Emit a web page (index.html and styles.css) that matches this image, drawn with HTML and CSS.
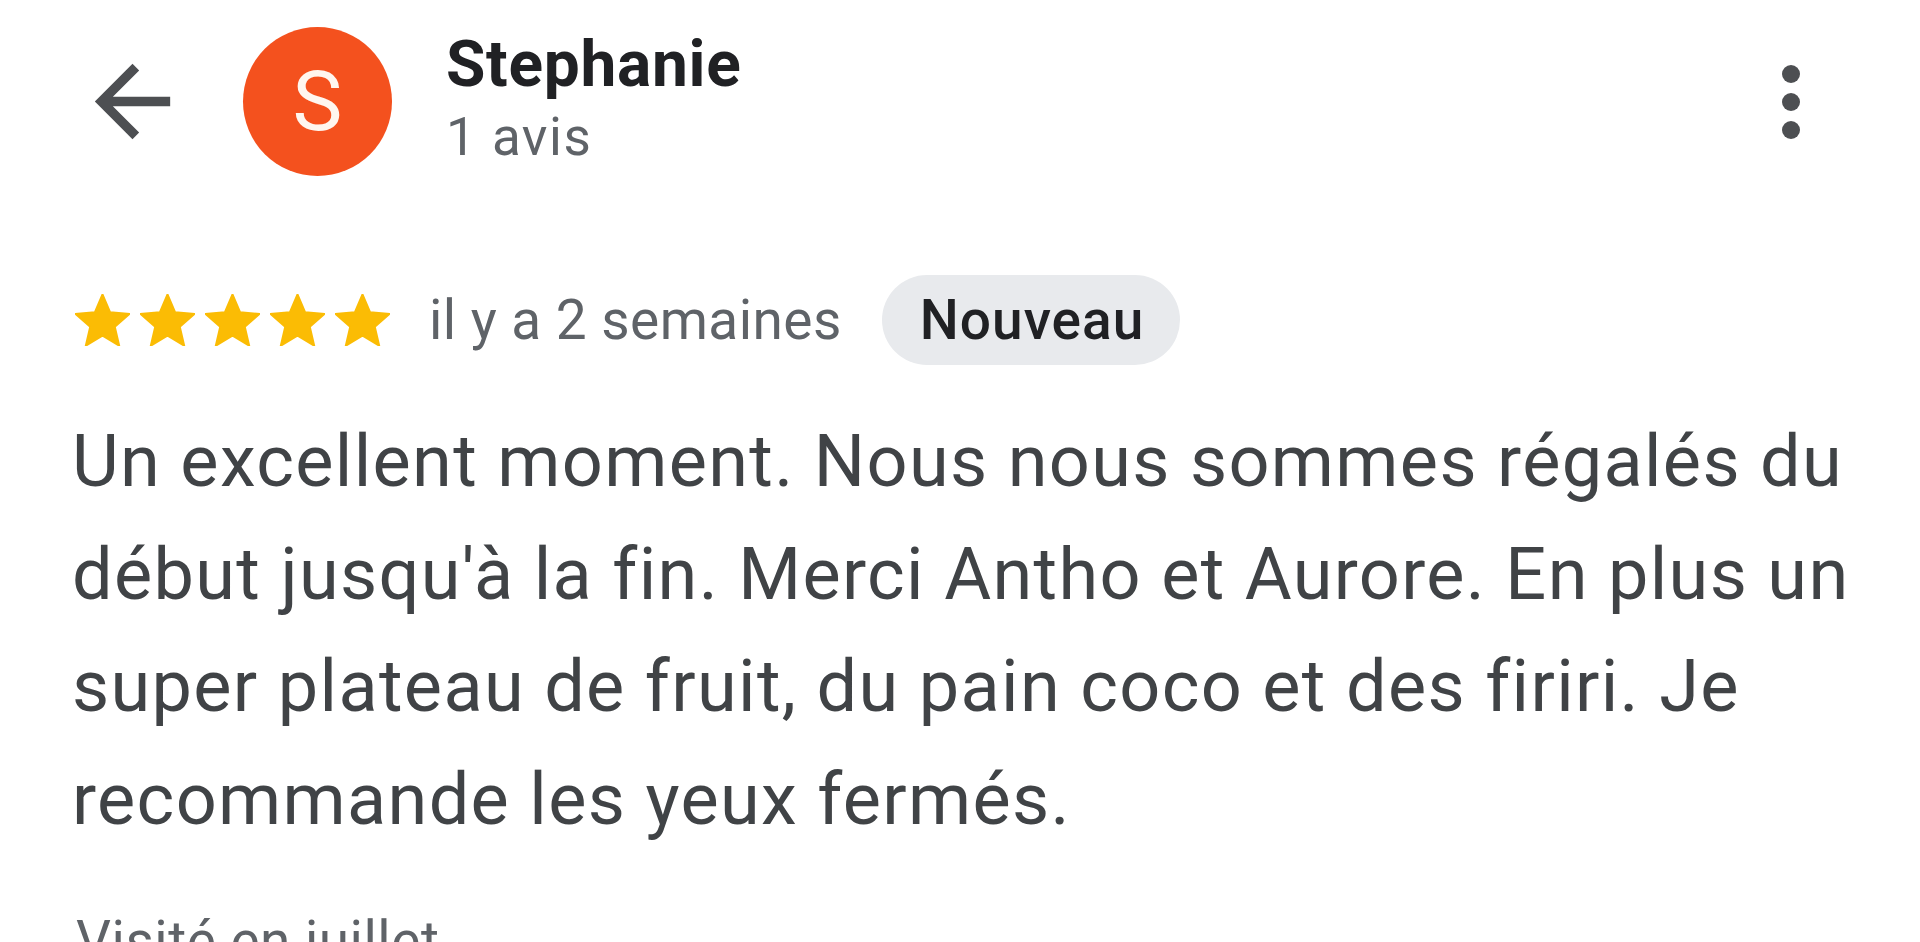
FILE: index.html
```html
<!DOCTYPE html>
<html lang="fr">
<head>
<meta charset="utf-8">
<title>Avis - Stephanie</title>
<link rel="stylesheet" href="styles.css">
</head>
<body>
<div class="page">
  <header class="header">
    <div class="back" aria-label="Retour">
      <svg viewBox="0 0 24 24" width="113" height="113"><path d="M20 11H7.83l5.59-5.59L12 4l-8 8 8 8 1.41-1.41L7.83 13H20v-2z"/></svg>
    </div>
    <div class="avatar">S</div>
    <div class="who">
      <div class="name">Stephanie</div>
      <div class="count">1 avis</div>
    </div>
    <div class="more" aria-label="Plus d'options">
      <span class="dot"></span><span class="dot"></span><span class="dot"></span>
    </div>
  </header>

  <div class="meta">
    <div class="stars">
      <svg class="star" viewBox="2 2 20 19"><path d="M12 17.27L18.18 21l-1.64-7.03L22 9.24l-7.19-.61L12 2 9.19 8.63 2 9.24l5.46 4.73L5.82 21z"/></svg>
      <svg class="star" viewBox="2 2 20 19"><path d="M12 17.27L18.18 21l-1.64-7.03L22 9.24l-7.19-.61L12 2 9.19 8.63 2 9.24l5.46 4.73L5.82 21z"/></svg>
      <svg class="star" viewBox="2 2 20 19"><path d="M12 17.27L18.18 21l-1.64-7.03L22 9.24l-7.19-.61L12 2 9.19 8.63 2 9.24l5.46 4.73L5.82 21z"/></svg>
      <svg class="star" viewBox="2 2 20 19"><path d="M12 17.27L18.18 21l-1.64-7.03L22 9.24l-7.19-.61L12 2 9.19 8.63 2 9.24l5.46 4.73L5.82 21z"/></svg>
      <svg class="star" viewBox="2 2 20 19"><path d="M12 17.27L18.18 21l-1.64-7.03L22 9.24l-7.19-.61L12 2 9.19 8.63 2 9.24l5.46 4.73L5.82 21z"/></svg>
    </div>
    <span class="when">il y a 2 semaines</span>
    <span class="chip">Nouveau</span>
  </div>

  <p class="review">Un excellent moment. Nous nous sommes régalés du début jusqu'à la fin. Merci Antho et Aurore. En plus un super plateau de fruit, du pain coco et des firiri. Je recommande les yeux fermés.</p>

  <div class="visit">Visité en juillet</div>
</div>
</body>
</html>
```

FILE: styles.css
```css
html, body {
  margin: 0;
  padding: 0;
  background: #ffffff;
}

body {
  font-family: Roboto, "Liberation Sans", Arial, sans-serif;
  overflow: hidden;
  height: 942px;
}

.page {
  padding: 0 0 0 72px;
  width: 1920px;
  box-sizing: border-box;
}

.header {
  display: flex;
  align-items: center;
  height: 149px;
  margin-top: 27px;
  margin-left: -72px;
  padding-left: 76px;
  padding-right: 120px;
}

.back {
  width: 113px;
  height: 113px;
  display: flex;
}

.back svg {
  fill: #4d4f52;
}

.avatar {
  width: 149px;
  height: 149px;
  border-radius: 50%;
  background: #f4511e;
  color: #fff6ef;
  display: flex;
  align-items: center;
  justify-content: center;
  font-size: 84px;
  font-weight: 400;
  margin-left: 54px;
  flex: none;
}

.who {
  margin-left: 54px;
  display: flex;
  flex-direction: column;
  margin-top: -2px;
}

.name {
  font-size: 64px;
  font-weight: 700;
  color: #202124;
  line-height: 72px;
  letter-spacing: 0.7px;
}

.count {
  font-size: 53px;
  color: #5f6368;
  line-height: 72px;
  letter-spacing: 1.5px;
}

.more {
  margin-left: auto;
  display: flex;
  flex-direction: column;
  gap: 10px;
}

.dot {
  width: 18px;
  height: 18px;
  border-radius: 50%;
  background: #4d4f52;
}

.meta {
  display: flex;
  align-items: center;
  margin-top: 99px;
  height: 90px;
}

.stars {
  display: flex;
  gap: 10px;
  margin-left: 3px;
}

.star {
  width: 55px;
  height: 52px;
  fill: #fbbc04;
  stroke: #fbbc04;
  stroke-width: 0.6;
  stroke-linejoin: round;
}

.when {
  margin-left: 39px;
  font-size: 55px;
  color: #5f6368;
  letter-spacing: 0.45px;
}

.chip {
  margin-left: 40px;
  height: 90px;
  padding: 0 36px 0 38px;
  border-radius: 45px;
  background: #e8eaed;
  color: #202124;
  font-size: 55px;
  font-weight: 500;
  letter-spacing: 1px;
  display: flex;
  align-items: center;
}

.review {
  margin: 41px 0 0 0;
  max-width: 1820px;
  font-size: 72px;
  line-height: 112.5px;
  letter-spacing: 1.35px;
  color: #404346;
}

.visit {
  margin-top: 49px;
  padding-left: 4px;
  font-size: 55px;
  line-height: 72px;
  color: #5f6368;
  letter-spacing: 0.5px;
}
```
